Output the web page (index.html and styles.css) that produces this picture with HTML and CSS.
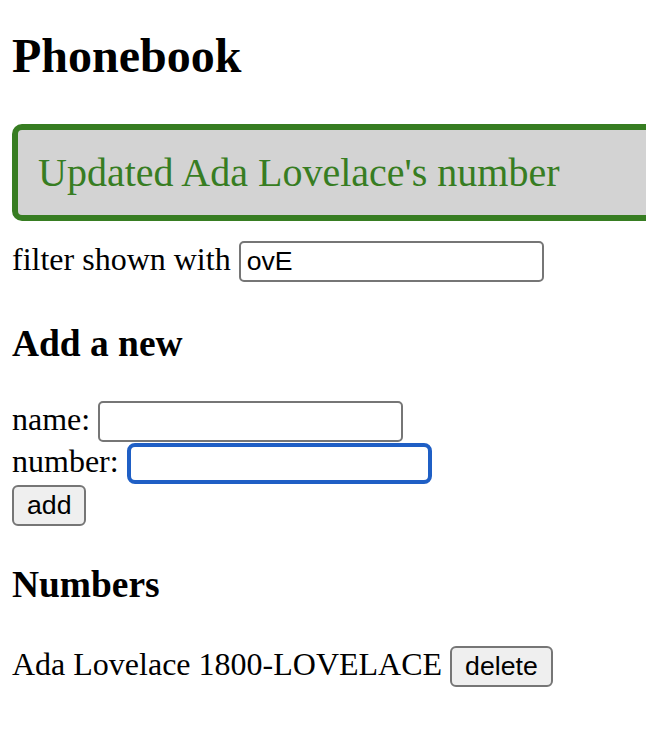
FILE: index.html
```html
<!DOCTYPE html>
<html lang="en">
<head>
<meta charset="utf-8">
<title>Phonebook</title>
<link rel="stylesheet" href="styles.css">
</head>
<body>
<div class="app">
  <h2 class="title">Phonebook</h2>
  <div class="notification">Updated Ada Lovelace's number</div>
  <div class="filter">filter shown with <input class="field" value="ovE"></div>
  <h3 class="section section-first">Add a new</h3>
  <form class="person-form">
    <div class="row">name: <input class="field"></div>
    <div class="row">number: <input class="field field-focused"></div>
    <div class="row"><button class="btn" type="submit">add</button></div>
  </form>
  <h3 class="section">Numbers</h3>
  <div class="person">Ada Lovelace 1800-LOVELACE <button class="btn" type="button">delete</button></div>
</div>
</body>
</html>
```
FILE: styles.css
```css
html {
  overflow-x: hidden;
}

body {
  margin: 0;
  padding: 0 12px;
  font-family: "Liberation Serif", "Times New Roman", serif;
  font-size: 32px;
  color: #000;
  background: #fff;
}

.title {
  font-size: 48px;
  font-weight: bold;
  margin: 28px 0 41px;
}

.notification {
  color: #377d22;
  background: #d3d3d3;
  font-size: 40px;
  border: 6px solid #377d22;
  border-radius: 10px;
  padding: 19px 20px;
  margin: 0 -60px 20px 0;
}

.field {
  box-sizing: border-box;
  width: 305px;
  height: 41px;
  font-family: "Liberation Sans", Arial, sans-serif;
  font-size: 26.67px;
  padding: 0 6px;
  border: 2px solid #767676;
  border-radius: 5px;
  background: #fff;
  color: #000;
  margin: 0;
}

.field-focused {
  border: 4px solid #1f5fc5;
  border-radius: 8px;
  padding: 0 4px;
  outline: none;
}

.section {
  font-size: 37.44px;
  font-weight: bold;
  margin: 37.44px 0 39.5px;
}

.section-first {
  margin: 40px 0 36px;
}

.person-form {
  margin: 0;
}

.row + .row {
  margin-top: 1px;
}

.btn {
  box-sizing: border-box;
  height: 41px;
  font-family: "Liberation Sans", Arial, sans-serif;
  font-size: 26.67px;
  padding: 0 13px;
  border: 2px solid #767676;
  border-radius: 6px;
  background: #efefef;
  color: #000;
  margin: 0;
}
```
